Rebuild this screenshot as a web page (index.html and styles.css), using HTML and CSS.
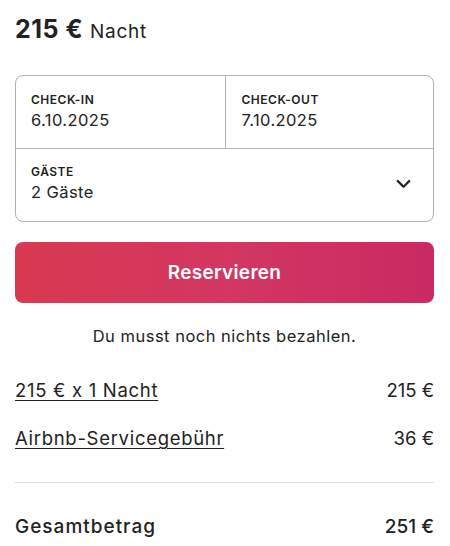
FILE: index.html
```html
<!DOCTYPE html>
<html lang="de">
<head>
<meta charset="utf-8">
<link rel="stylesheet" href="styles.css">
</head>
<body>
<div class="card">
  <div class="price"><span class="amount">215 €</span> <span class="unit">Nacht</span></div>
  <div class="picker">
    <div class="dates">
      <div class="field">
        <div class="label">CHECK-IN</div>
        <div class="value">6.10.2025</div>
      </div>
      <div class="field field-right">
        <div class="label">CHECK-OUT</div>
        <div class="value">7.10.2025</div>
      </div>
    </div>
    <div class="field guests">
      <div>
        <div class="label">GÄSTE</div>
        <div class="value">2 Gäste</div>
      </div>
      <svg class="chev" width="17" height="17" viewBox="0 0 32 32" aria-hidden="true"><path d="M28 12 16.7 23.3a1 1 0 0 1-1.4 0L4 12" fill="none" stroke="#222" stroke-width="4"/></svg>
    </div>
  </div>
  <button class="reserve">Reservieren</button>
  <p class="note">Du musst noch nichts bezahlen.</p>
  <div class="rows">
    <div class="row"><span class="link">215 € x 1 Nacht</span><span class="num">215 €</span></div>
    <div class="row"><span class="link">Airbnb-Servicegebühr</span><span class="num">36 €</span></div>
  </div>
  <div class="total"><span>Gesamtbetrag</span><span class="num">251 €</span></div>
</div>
</body>
</html>
```
FILE: styles.css
```css
* { box-sizing: border-box; }
html, body { margin: 0; padding: 0; background: #fff; }
body {
  font-family: Inter, "Noto Sans", sans-serif;
  color: #222;
}
.card {
  padding: 14px 16px 0 15px;
  width: 450px;
}
.price {
  display: flex;
  align-items: baseline;
  gap: 7px;
  height: 34px;
}
.amount { font-size: 25px; font-weight: 700; letter-spacing: 0.5px; }
.unit { font-size: 19px; font-weight: 400; letter-spacing: 0.7px; }
.picker {
  margin-top: 27px;
  border: 1px solid #b0b0b0;
  border-radius: 8px;
}
.dates {
  display: grid;
  grid-template-columns: 1fr 1fr;
  border-bottom: 1px solid #b0b0b0;
}
.field {
  padding: 16px 15px 14px 15px;
  height: 72px;
}
.field-right { border-left: 1px solid #b0b0b0; padding-left: 16px; }
.label {
  font-size: 12px;
  font-weight: 600;
  letter-spacing: 0.5px;
  line-height: 16px;
}
.value {
  font-size: 16.5px;
  line-height: 22px;
  margin-top: 1px;
  letter-spacing: 0.4px;
}
.guests {
  display: flex;
  align-items: center;
  justify-content: space-between;
  padding-top: 13px;
  padding-bottom: 16px;
  padding-right: 21px;
}
.chev { display: block; margin-top: -2px; }
.reserve {
  display: block;
  width: 100%;
  margin-top: 20px;
  height: 61px;
  border: none;
  border-radius: 8px;
  background: linear-gradient(90deg, #d93950 0%, #d33762 50%, #c92a62 100%);
  color: #fff;
  font-family: inherit;
  font-size: 19px;
  font-weight: 600;
  letter-spacing: 0.3px;
}
.note {
  margin: 22px 0 0;
  text-align: center;
  font-size: 16.5px;
  line-height: 22px;
  letter-spacing: 0.5px;
}
.rows { margin-top: 31px; }
.row, .total {
  display: flex;
  justify-content: space-between;
  font-size: 18.5px;
  line-height: 24px;
  letter-spacing: 0.7px;
}
.row .num, .total .num { letter-spacing: 0; }
.row + .row { margin-top: 24px; }
.link { text-decoration: underline; text-underline-offset: 3px; text-decoration-thickness: 1px; }
.total {
  margin-top: 32px;
  padding-top: 32px;
  border-top: 1px solid #dddddd;
  font-weight: 500;
  font-size: 19px;
  letter-spacing: 1px;
}
```
